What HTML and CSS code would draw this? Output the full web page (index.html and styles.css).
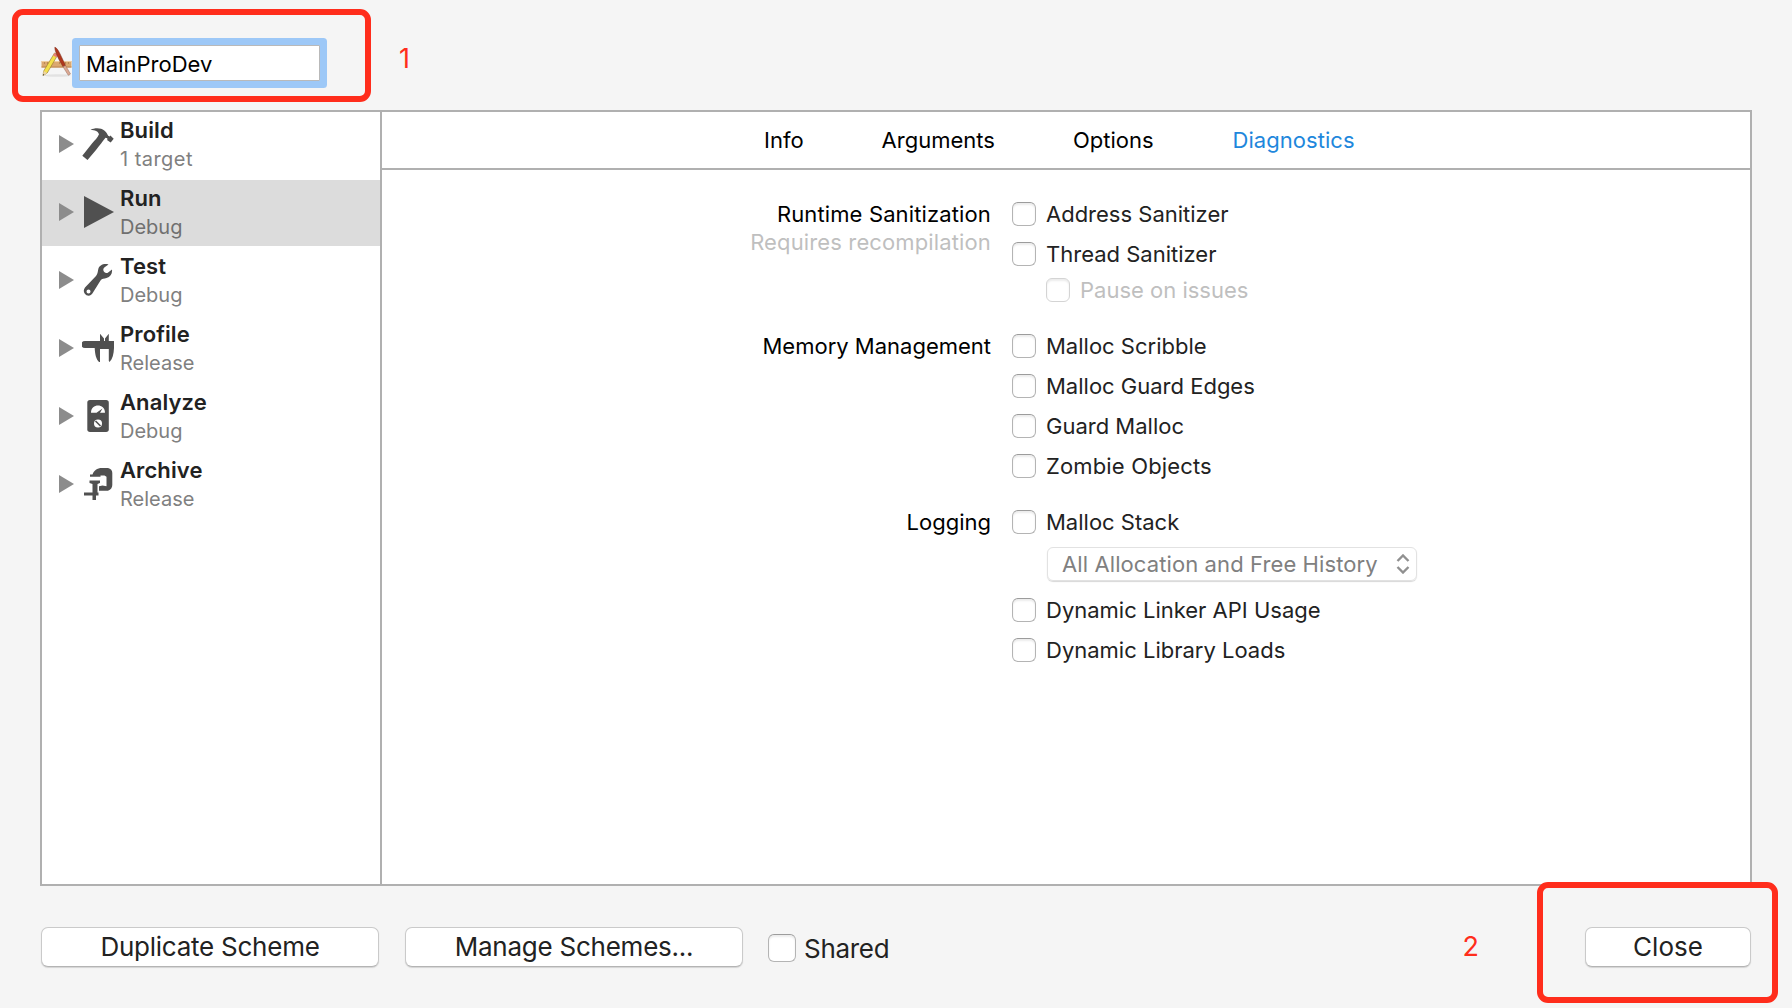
FILE: index.html
```html
<!DOCTYPE html>
<html lang="en">
<head>
<meta charset="utf-8">
<title>Edit Scheme</title>
<link rel="stylesheet" href="styles.css">
</head>
<body>
<div class="sheet">
  <header class="scheme">
    <svg class="scheme-icon" viewBox="0 0 30 32">
      <ellipse cx="16" cy="29.500" rx="13" ry="1.300" fill="#e2e2e2"/>
      <path d="M0 15h30v6.500H0z" fill="#dba870"/>
      <path d="M0 15h30v1H0z" fill="#f0cda0"/><path d="M0 20.500h30v1H0z" fill="#bd8450"/>
      <path d="M3 16v2M6 16v2M9 16v2M18 16v2M21 16v2M24 16v2M27 16v2" stroke="#a87342" stroke-width=".6"/>
      <path d="M13 7 16.300 8.800 5.700 27 1.500 29.700 2.200 25z" fill="#f4e04a" stroke="#917528" stroke-width=".6"/>
      <path d="M13 7 16.300 8.800 14.900 11.200 11.600 9.400z" fill="#e77f7a"/>
      <path d="M2.200 25 5.700 27 1.500 29.700z" fill="#ecd3a5"/><path d="M1.700 28 2.800 28.600 1.400 29.800z" fill="#333"/>
      <path d="M13.300 1.300C15.500 1.500 18 6.500 20.500 12L24 19.500 21.500 20.800 17.200 13C15 8.500 13.200 4 13.300 1.300z" fill="#b0371d" stroke="#742818" stroke-width=".5"/>
      <path d="M21.500 20.800 24 19.500 29 28 26.800 29.300z" fill="#dca993" stroke="#95685a" stroke-width=".5"/>
    </svg>
    <input class="scheme-name" type="text" value="MainProDev">
    <span class="step">1</span>
  </header>

  <main class="panel">
    <nav class="actions">
      <div class="action">
        <svg class="disclosure" viewBox="0 0 15 18"><path d="M0 0 15 9 0 18z"/></svg>
        <svg class="glyph" viewBox="0 0 32 32"><path d="M8.500 1.800C13-.5 19-.2 22.300 2.400 24.300 4 25.300 5.800 26.200 7.800L27.500 8.600 28.400 7.600 31.700 10.800 28.700 14.500 25.300 12.300 25.300 10.200 23.500 9.700C20 14 18 17 14 22L5.500 32 .3 27.700 10 15.500C13 12 15.500 10 17 6.300 16 3 13 2.300 8.500 1.800z"/></svg>
        <div class="action-text"><b class="action-name">Build</b><span class="action-info count">1 target</span></div>
      </div>
      <div class="action selected">
        <svg class="disclosure" viewBox="0 0 15 18"><path d="M0 0 15 9 0 18z"/></svg>
        <svg class="glyph" viewBox="0 0 32 32"><path d="M2 0 32 16 2 32z"/></svg>
        <div class="action-text"><b class="action-name">Run</b><span class="action-info">Debug</span></div>
      </div>
      <div class="action">
        <svg class="disclosure" viewBox="0 0 15 18"><path d="M0 0 15 9 0 18z"/></svg>
        <svg class="glyph" viewBox="0 0 32 32"><path fill-rule="evenodd" d="M26.500.5C22-.8 17 1 16.200 5.500 15.800 8 15.500 10 14 12L3 23.500C.8 26.300 1.800 30 4.500 31.200 7 32.300 9.800 31.300 11 28.500L18.500 16.500C20 14.500 22 14.700 24.500 14 28.500 12.800 30.500 9.500 30 5.500L25.800 8.800C23.500 9.600 21.300 8 21.300 5.700 21.300 4.500 22 3.800 22.600 3.200zM6.500 25.400a2 2 0 1 0 .01 4 2 2 0 0 0 0-4z"/></svg>
        <div class="action-text"><b class="action-name">Test</b><span class="action-info">Debug</span></div>
      </div>
      <div class="action">
        <svg class="disclosure" viewBox="0 0 15 18"><path d="M0 0 15 9 0 18z"/></svg>
        <svg class="glyph" viewBox="0 0 32 32"><path d="M3 9H18V1.800L22 6.500V9H23V6.500L26.800 1.800V9H32V16C31.800 22 30.500 27 27.500 30L26.800 29V17H18V30H17C14 27 13 22 12.700 16H3A3.500 3.500 0 0 1 3 9z"/></svg>
        <div class="action-text"><b class="action-name">Profile</b><span class="action-info">Release</span></div>
      </div>
      <div class="action">
        <svg class="disclosure" viewBox="0 0 15 18"><path d="M0 0 15 9 0 18z"/></svg>
        <svg class="glyph" viewBox="0 0 32 32"><rect x="5.300" width="21.500" height="32" rx="2.700"/><path d="M9 12.700C9 3 23 3 23 12.700H18L20.500 8.500 14.500 12.700z" fill="#fff"/><circle cx="16" cy="23.500" r="4" fill="#fff"/><path d="M13.500 21 18.500 26" stroke="#505050" stroke-width="1.600"/></svg>
        <div class="action-text"><b class="action-name">Analyze</b><span class="action-info">Debug</span></div>
      </div>
      <div class="action">
        <svg class="disclosure" viewBox="0 0 15 18"><path d="M0 0 15 9 0 18z"/></svg>
        <svg class="glyph" viewBox="0 0 32 32"><path d="M8 6.500H10.500C12 2.500 15 0 20 0H26Q30.300 1 30.300 5V17Q30.300 21 26 22.800H17V18.300L20.500 17.500 24.500 18.300V8.800L22.500 7.500H18.500V8.800H8z"/><path d="M7.500 12.500H18V15L15.500 16V24.500H16.500V27.500H14V32H10.500V27.500H2V24.500H10.500V16L7.500 15z"/></svg>
        <div class="action-text"><b class="action-name">Archive</b><span class="action-info">Release</span></div>
      </div>
    </nav>

    <section class="detail">
      <div class="tabs">
        <span class="tab">Info</span><span class="tab">Arguments</span><span class="tab">Options</span><span class="tab current">Diagnostics</span>
      </div>
      <div class="settings">
        <div class="heading wide"><div>Runtime Sanitization</div><div class="note">Requires recompilation</div></div>
        <div class="options">
          <label class="option"><input class="check" type="checkbox"><span>Address Sanitizer</span></label>
          <label class="option"><input class="check" type="checkbox"><span>Thread Sanitizer</span></label>
          <label class="option nested"><input class="check" type="checkbox" disabled><span>Pause on issues</span></label>
        </div>
        <div class="heading"><span>Memory Management</span></div>
        <div class="options">
          <label class="option"><input class="check" type="checkbox"><span>Malloc Scribble</span></label>
          <label class="option"><input class="check" type="checkbox"><span>Malloc Guard Edges</span></label>
          <label class="option"><input class="check" type="checkbox"><span>Guard Malloc</span></label>
          <label class="option objects"><input class="check" type="checkbox"><span>Zombie Objects</span></label>
        </div>
        <div class="heading"><span>Logging</span></div>
        <div class="options">
          <label class="option"><input class="check" type="checkbox"><span>Malloc Stack</span></label>
          <div class="popup"><span>All Allocation and Free History</span><svg class="arrows" viewBox="0 0 14 20"><path d="M1.500 7 7 1.500 12.500 7M1.500 13 7 18.500 12.500 13"/></svg></div>
          <label class="option"><input class="check" type="checkbox"><span>Dynamic Linker API Usage</span></label>
          <label class="option"><input class="check" type="checkbox"><span>Dynamic Library Loads</span></label>
        </div>
      </div>
    </section>
  </main>

  <footer class="bar">
    <button class="button">Duplicate Scheme</button>
    <button class="button">Manage Schemes...</button>
    <label class="shared"><input class="check large" type="checkbox"><span class="shared-text">Shared</span></label>
    <span class="step second">2</span>
    <button class="button close">Close</button>
  </footer>
  <div class="marker name-marker"></div>
  <div class="marker close-marker"></div>
</div>
</body>
</html>
```
FILE: styles.css
```css
* { box-sizing: border-box; }

body {
  margin: 0;
  background: #f5f5f5;
  color: #222;
  font: 22px/28px Inter, "Liberation Sans", sans-serif;
  white-space: nowrap;
}

.sheet {
  position: relative;
  width: 1792px;
  height: 1008px;
  padding: 0 40px;
  overflow: hidden;
}

.scheme { display: flex; align-items: flex-start; height: 110px; padding-top: 38px; }
.scheme-icon { width: 31px; height: 32px; margin: 8px 0 0 1px; }
.scheme-name {
  width: 241px;
  height: 36px;
  margin: 7px 0 0 7px;
  padding: 2px 6px 0;
  border: 1px solid #b9b9b9;
  border-radius: 1px;
  outline: 0;
  background: #fff;
  box-shadow: 0 0 0 7px #9dc8f7;
  color: #000;
  font: inherit;
}
.step { color: #ff2d1c; font-size: 27px; line-height: 40px; }
.scheme .step { margin: 1px 0 0 79px; }

.panel {
  display: flex;
  width: 1712px;
  height: 776px;
  border: 2px solid #b0b0b0;
  background: #fff;
}

.actions { width: 340px; border-right: 2px solid #b0b0b0; }
.action {
  display: flex;
  align-items: flex-start;
  height: 66px;
  margin-bottom: 2px;
  padding-left: 17px;
}
.selected { background: #dcdcdc; }
.disclosure { width: 15px; height: 18px; margin: 23px 8px 0 0; fill: #8c8c8c; }
.glyph { width: 32px; height: 32px; margin: 16px 6px 0 0; fill: #505050; }
.action-text { display: flex; flex-direction: column; align-items: flex-start; padding-top: 4px; }
.action-name { font-weight: 600; line-height: 28px; letter-spacing: .1px; }
.action-info { color: #808080; font-size: 20px; line-height: 30px; }
.count { letter-spacing: .45px; }
.selected .action-info { color: #707070; }

.detail { flex: 1; color: #000; }
.tabs {
  display: flex;
  height: 58px;
  padding-left: 382px;
  border-bottom: 2px solid #b0b0b0;
  gap: 78px;
  line-height: 56px;
}
.current { margin-left: 1px; color: #1e87dc; letter-spacing: .05px; }

.settings {
  display: grid;
  grid-template-columns: 609px auto;
  column-gap: 21px;
  row-gap: 32px;
  padding-top: 32px;
}
.heading { margin-top: -2px; text-align: right; }
.wide { letter-spacing: .13px; }
.note { color: #bfbfbf; }
.options { display: flex; flex-direction: column; align-items: flex-start; gap: 16px; color: #222; }
.option { display: flex; align-items: center; gap: 10px; height: 24px; }
.objects { letter-spacing: .15px; }
.nested { margin: -4px 0 0 34px; color: #bfbfbf; }

.check {
  appearance: none;
  width: 24px;
  height: 24px;
  margin: 0;
  border: 1px solid #b4b4b4;
  border-top-color: #9c9c9c;
  border-radius: 6px;
  background: #fff;
  box-shadow: inset 0 2px 2px #ececec;
}
.check:disabled { border-color: #d4d4d4; }
.large { width: 28px; height: 28px; }

.popup {
  display: flex;
  align-items: center;
  justify-content: space-between;
  width: 370px;
  height: 34px;
  margin: -3px 0 1px 35px;
  padding: 0 6px 0 14px;
  border: 1px solid #e2e2e2;
  border-radius: 6px;
  box-shadow: 0 1px 1px #d8d8d8;
  color: #808080;
  letter-spacing: .1px;
}
.arrows { width: 14px; height: 20px; fill: none; stroke: #909090; stroke-width: 2.4; }

.bar { display: flex; align-items: flex-start; padding: 41px 0 0 1px; font-size: 26px; }
.button {
  width: 338px;
  height: 40px;
  margin: 0 26px 0 0;
  padding: 0;
  border: 1px solid #cacaca;
  border-bottom-color: #b4b4b4;
  border-radius: 7px;
  background: #fff;
  box-shadow: 0 1px 1px #d4d4d4;
  color: #222;
  font: inherit;
  letter-spacing: -.24px;
  line-height: 38px;
}
.shared { display: flex; align-items: center; gap: 8px; height: 28px; margin: 7px 0 0 -1px; letter-spacing: -.3px; }
.shared-text { padding-top: 2px; }
.second { margin-left: auto; }
.bar .close { width: 166px; margin: 0 1px 0 106px; letter-spacing: 0; }

.marker { position: absolute; border: 6px solid #ff2d1c; border-radius: 11px; }
.name-marker { left: 12px; top: 9px; width: 359px; height: 93px; }
.close-marker { left: 1537px; top: 882px; width: 241px; height: 121px; }
```
